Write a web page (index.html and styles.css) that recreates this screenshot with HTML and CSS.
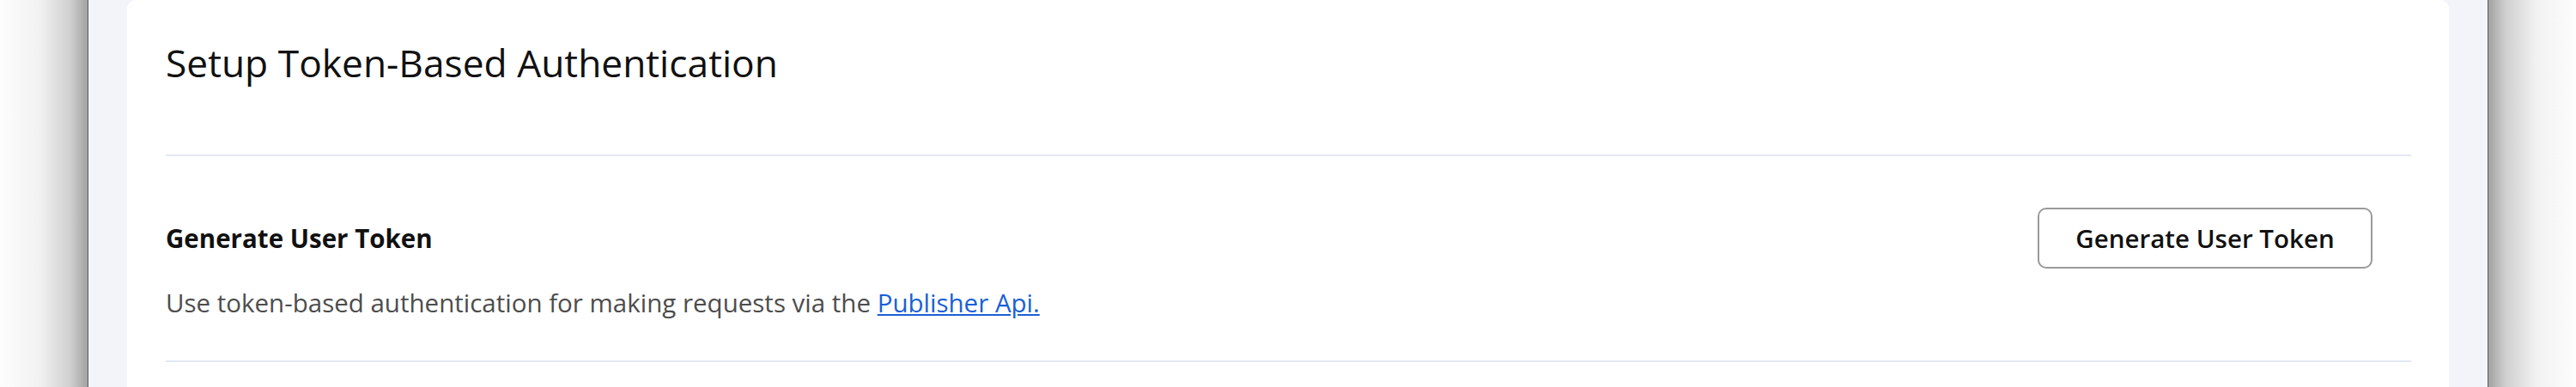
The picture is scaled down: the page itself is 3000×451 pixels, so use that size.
FILE: index.html
```html
<!DOCTYPE html>
<html lang="en">
<head>
    <meta charset="UTF-8">
    <meta name="viewport" content="width=device-width, initial-scale=1.0">
    <title>Token Authentication</title>

    <link rel="stylesheet" href="styles.css">
</head>
<body>
    <div class="shade shade-left"></div>
    <div class="frame">
        <div class="card">
            <div class="card-header">
                <h2>Setup Token-Based Authentication</h2>
            </div>
            <div class="token-row">
                <div class="token-info">
                    <h3>Generate User Token</h3>
                    <p>Use token-based authentication for making requests via the <a href="#">Publisher Api.</a></p>
                </div>
                <button type="button">Generate User Token</button>
            </div>
        </div>
    </div>
    <div class="shade shade-right"></div>
</body>
</html>
```

FILE: styles.css
```css
body {
    font-family: 'Open Sans', 'Noto Sans', sans-serif;
    margin: 0;
    height: 451px;
    display: flex;
    overflow: hidden;
    background: #fff;
}
.shade { width: 102px; flex-shrink: 0; }
.shade-left { background: linear-gradient(to right, #fdfdfd, #f2f2f2 45%, #d0d0d0 80%, #a2a2a2); }
.shade-right { background: linear-gradient(to left, #fdfdfd, #f2f2f2 45%, #d0d0d0 80%, #a2a2a2); }
.frame {
    flex: 1;
    background-color: #f3f4f9;
    border-left: 1px solid #5c5c5c;
    border-right: 1px solid #5c5c5c;
    padding: 0 45px;
}
.card {
    background-color: white;
    border-radius: 10px 10px 0 0;
    padding: 0 44px 0 45px;
    height: 100%;
}
.card-header {
    padding: 43px 0 77px;
    border-bottom: 2px solid #e4e7f5;
}
h2 {
    margin: 0;
    font-size: 44.3px;
    font-weight: 400;
    line-height: 60px;
    color: #111;
}
.token-row {
    display: flex;
    justify-content: space-between;
    align-items: flex-start;
    padding: 60px 45px 48px 0;
    border-bottom: 2px solid #e4e7f5;
}
.token-info { padding-top: 17px; }
h3 {
    margin: 0;
    font-size: 29.5px;
    font-weight: 700;
    line-height: 38px;
    color: #111;
}
.token-info p {
    margin: 37px 0 0;
    font-size: 29.5px;
    line-height: 38px;
    color: #4d4d4d;
}
.token-info a { color: #1a5fd6; }
button {
    font-family: inherit;
    font-size: 29.5px;
    font-weight: 600;
    color: #111;
    background-color: white;
    border: 2px solid #9a9a9a;
    border-radius: 10px;
    width: 390px;
    height: 71px;
    padding: 0;
}
```
